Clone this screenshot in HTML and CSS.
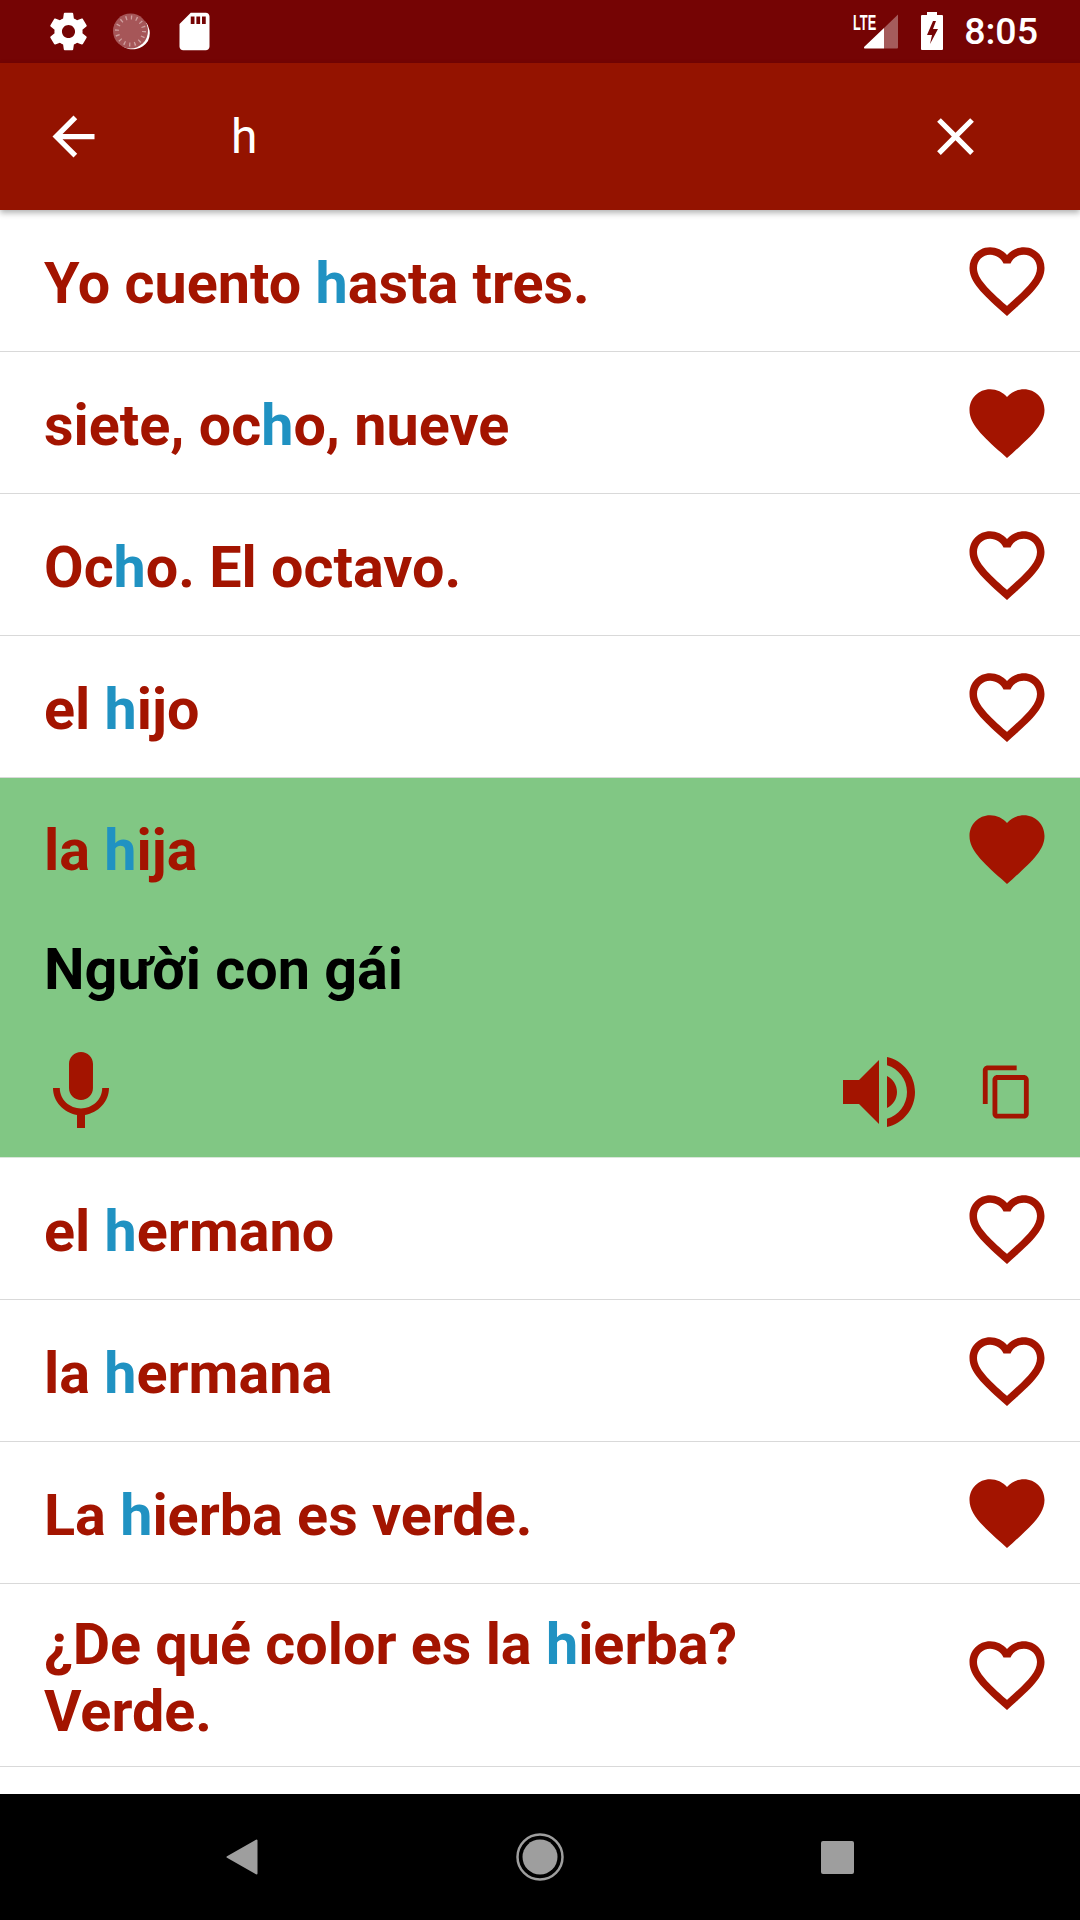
FILE: index.html
```html
<!DOCTYPE html>
<html lang="es">
<head>
<meta charset="utf-8">
<title>Search</title>
<link rel="stylesheet" href="styles.css">
</head>
<body>
<svg class="defs" width="0" height="0" aria-hidden="true">
  <symbol id="heart-o" viewBox="0 0 24 24"><path d="M16.5 3c-1.74 0-3.41.81-4.5 2.09C10.91 3.81 9.24 3 7.5 3 4.42 3 2 5.42 2 8.5c0 3.78 3.4 6.86 8.55 11.54L12 21.35l1.45-1.32C18.6 15.36 22 12.28 22 8.5 22 5.42 19.58 3 16.5 3zm-4.4 15.55l-.1.1-.1-.1C7.14 14.24 4 11.39 4 8.5 4 6.5 5.5 5 7.5 5c1.54 0 3.04.99 3.57 2.36h1.87C13.46 5.99 14.96 5 16.5 5c2 0 3.5 1.5 3.5 3.5 0 2.89-3.14 5.74-7.9 10.05z"/></symbol>
  <symbol id="heart-f" viewBox="0 0 24 24"><path d="M12 21.35l-1.45-1.32C5.4 15.36 2 12.28 2 8.5 2 5.42 4.42 3 7.5 3c1.74 0 3.41.81 4.5 2.09C13.09 3.81 14.76 3 16.5 3 19.58 3 22 5.42 22 8.5c0 3.78-3.4 6.86-8.55 11.54L12 21.35z"/></symbol>
</svg>
<div class="screen">
  <header class="status">
    <div class="status-left">
      <svg class="si" viewBox="0 0 24 24"><path fill="#fff" d="M19.43 12.98c.04-.32.07-.64.07-.98s-.03-.66-.07-.98l2.11-1.65c.19-.15.24-.42.12-.64l-2-3.46c-.12-.22-.39-.3-.61-.22l-2.49 1c-.52-.4-1.08-.73-1.69-.98l-.38-2.65C14.46 2.18 14.25 2 14 2h-4c-.25 0-.46.18-.49.42l-.38 2.65c-.61.25-1.17.59-1.69.98l-2.49-1c-.23-.09-.49 0-.61.22l-2 3.46c-.13.22-.07.49.12.64l2.11 1.65c-.04.32-.07.65-.07.98s.03.66.07.98l-2.11 1.65c-.19.15-.24.42-.12.64l2 3.46c.12.22.39.3.61.22l2.49-1c.52.4 1.08.73 1.69.98l.38 2.65c.03.24.24.42.49.42h4c.25 0 .46-.18.49-.42l.38-2.65c.61-.25 1.17-.59 1.69-.98l2.49 1c.23.09.49 0 .61-.22l2-3.46c.12-.22.07-.49-.12-.64l-2.11-1.65zM12 15.5c-1.93 0-3.5-1.57-3.5-3.5s1.57-3.5 3.5-3.5 3.5 1.57 3.5 3.5-1.57 3.5-3.5 3.5z"/></svg>
      <svg class="si" viewBox="0 0 45 45">
        <path fill="#fff" d="M36 12a18 18 0 0 1-23 25 18.500 18.500 0 0 0 26-5 18 18 0 0 0-3-20z"/>
        <circle cx="21.500" cy="22" r="17.500" fill="#a65658"/>
        <circle cx="21.500" cy="22" r="13.500" fill="none" stroke="#cfa0a0" stroke-width="4" stroke-dasharray="1.300 4"/>
      </svg>
      <svg class="si" viewBox="0 0 24 24"><path fill="#fff" d="M18 2h-8L4.02 8 4 20c0 1.1.9 2 2 2h12c1.1 0 2-.9 2-2V4c0-1.1-.9-2-2-2zm-6 6h-2V4h2v4zm3 0h-2V4h2v4zm3 0h-2V4h2v4z"/></svg>
    </div>
    <div class="status-right">
      <div class="signal">
        <svg class="signal-bars" viewBox="0 0 46 36">
          <path fill="#fff" fill-opacity=".35" d="M45 1.500v33a1 1 0 0 1-1 1H31V15z"/>
          <path fill="#fff" d="M31 15v20.500H12a1 1 0 0 1-.7-1.700z"/>
        </svg>
        <span class="lte">LTE</span>
      </div>
      <svg class="battery" viewBox="0 0 22 38"><path fill="#fff" fill-rule="evenodd" d="M6 0h10v3h5a1 1 0 0 1 1 1v33a1 1 0 0 1-1 1H1a1 1 0 0 1-1-1V4a1 1 0 0 1 1-1h5zM12 9l-6 14h5l-2 9 8-15h-5l3-8z"/></svg>
      <span class="time">8:05</span>
    </div>
  </header>
  <div class="toolbar">
    <svg class="tb-icon" viewBox="0 0 24 24"><path fill="#fff" d="M20 11H7.830l5.590-5.590L12 4l-8 8 8 8 1.410-1.410L7.830 13H20v-2z"/></svg>
    <span class="query">h</span>
    <svg class="tb-icon" viewBox="0 0 24 24"><path fill="#fff" d="M19 6.410L17.590 5 12 10.590 6.410 5 5 6.410 10.590 12 5 17.590 6.410 19 12 13.410 17.590 19 19 17.590 13.410 12z"/></svg>
  </div>
  <main class="list">
    <div class="row"><p class="phrase">Yo cuento <b>h</b>asta tres.</p><svg class="heart"><use href="#heart-o"/></svg></div>
    <div class="row"><p class="phrase">siete, oc<b>h</b>o, nueve</p><svg class="heart"><use href="#heart-f"/></svg></div>
    <div class="row"><p class="phrase">Oc<b>h</b>o. El octavo.</p><svg class="heart"><use href="#heart-o"/></svg></div>
    <div class="row"><p class="phrase">el <b>h</b>ijo</p><svg class="heart"><use href="#heart-o"/></svg></div>
    <section class="open">
      <div class="open-head"><p class="phrase phrase-open">la <b>h</b>ija</p><svg class="heart"><use href="#heart-f"/></svg></div>
      <p class="meaning">Người con gái</p>
      <div class="actions">
        <svg class="act" viewBox="0 0 24 24"><path d="M12 14c1.660 0 2.990-1.340 2.990-3L15 5c0-1.660-1.340-3-3-3S9 3.340 9 5v6c0 1.660 1.340 3 3 3zm5.300-3c0 3-2.540 5.100-5.300 5.100S6.700 14 6.700 11H5c0 3.410 2.720 6.230 6 6.720V21h2v-3.280c3.280-.48 6-3.300 6-6.720h-1.700z"/></svg>
        <span class="spacer"></span>
        <svg class="act" viewBox="0 0 24 24"><path d="M3 9v6h4l5 5V4L7 9H3zm13.500 3c0-1.770-1.020-3.290-2.500-4.030v8.050c1.480-.73 2.500-2.250 2.500-4.020zM14 3.230v2.060c2.890.86 5 3.540 5 6.710s-2.110 5.850-5 6.710v2.060c4.010-.91 7-4.490 7-8.770s-2.990-7.860-7-8.770z"/></svg>
        <svg class="copy" viewBox="0 0 24 24"><path d="M16 1H4c-1.100 0-2 .9-2 2v14h2V3h12V1zm3 4H8c-1.100 0-2 .9-2 2v14c0 1.100.9 2 2 2h11c1.100 0 2-.9 2-2V7c0-1.100-.9-2-2-2zm0 16H8V7h11v14z"/></svg>
      </div>
    </section>
    <div class="row"><p class="phrase">el <b>h</b>ermano</p><svg class="heart"><use href="#heart-o"/></svg></div>
    <div class="row"><p class="phrase">la <b>h</b>ermana</p><svg class="heart"><use href="#heart-o"/></svg></div>
    <div class="row"><p class="phrase">La <b>h</b>ierba es verde.</p><svg class="heart"><use href="#heart-f"/></svg></div>
    <div class="row"><p class="phrase">¿De qué color es la <b>h</b>ierba?<br>Verde.</p><svg class="heart"><use href="#heart-o"/></svg></div>
  </main>
  <footer class="nav">
    <svg class="nav-back" viewBox="0 0 32 36"><path fill="#9e9e9e" stroke="#9e9e9e" stroke-width="2" stroke-linejoin="round" d="M30.500 1.500v33L1.500 18z"/></svg>
    <svg class="nav-home" viewBox="0 0 48 48"><circle cx="24" cy="24" r="22.500" fill="none" stroke="#9e9e9e" stroke-width="2.500"/><circle cx="24" cy="24" r="17.500" fill="#9e9e9e"/></svg>
    <span class="nav-recent"></span>
  </footer>
</div>
</body>
</html>
```
FILE: styles.css
```css
* { box-sizing: border-box; }
html, body { margin: 0; padding: 0; }
body { width: 1080px; height: 1920px; overflow: hidden; font-family: Roboto, "Noto Sans", sans-serif; background: #fff; }
.defs { position: absolute; }
.screen { width: 1080px; height: 1920px; display: flex; flex-direction: column; }

.status { height: 63px; flex: none; background: #750404; display: flex; align-items: center; justify-content: space-between; padding: 0 42px 1px 46px; }
.status-left { display: flex; align-items: center; gap: 18px; }
.si { width: 45px; height: 45px; display: block; }
.status-right { display: flex; align-items: center; }
.signal { width: 46px; height: 36px; position: relative; }
.signal-bars { width: 46px; height: 36px; display: block; }
.lte { position: absolute; left: 0; top: -2px; font-family: "Liberation Sans", sans-serif; font-size: 22px; line-height: 24px; font-weight: 700; color: #fff; transform: scaleX(.58); transform-origin: left center; }
.battery { width: 22px; height: 38px; display: block; margin-left: 22px; }
.time { margin-left: 21px; color: #fff; font-size: 37.500px; font-weight: 500; line-height: 45px; }

.toolbar { height: 147px; flex: none; background: #941300; display: flex; align-items: center; padding: 0 93px 0 42px; box-shadow: 0 3px 6px rgba(0,0,0,.3); position: relative; z-index: 1; }
.tb-icon { width: 63px; height: 63px; display: block; flex: none; }
.query { flex: 1; margin-left: 126px; color: #fff; font-size: 48px; line-height: 63px; }

.list { flex: 1; display: flex; flex-direction: column; }
.row { min-height: 142px; flex: none; display: flex; align-items: center; justify-content: space-between; gap: 40px; padding: 24px 28.500px 24px 44px; border-bottom: 1px solid #d9d9d9; }
.phrase { margin: 0; flex: 1; color: #a31400; font-size: 57.500px; line-height: 67px; font-weight: 700; position: relative; top: 3px; }
.phrase-open { top: 1px; }
.phrase b { color: #2092c2; font-weight: 700; }
.heart { width: 90px; height: 90px; flex: none; display: block; fill: #a31400; }

.open { height: 380px; flex: none; background: #81c784; display: flex; flex-direction: column; border-bottom: 1px solid #d9e6da; }
.open-head { height: 142px; flex: none; display: flex; align-items: center; padding: 0 28.500px 0 44px; }
.meaning { margin: 0; padding-left: 44px; color: #000; font-size: 57.500px; line-height: 67px; font-weight: 700; flex: none; margin-top: 16px; }
.actions { display: flex; align-items: center; padding: 0 44px 0 33px; margin-top: 41px; }
.act { width: 96px; height: 96px; display: block; flex: none; fill: #a31400; }
.spacer { flex: 1; }
.copy { width: 58px; height: 58px; display: block; flex: none; fill: #a31400; margin-left: 51px; }

.nav { height: 126px; flex: none; background: #000; display: flex; align-items: center; padding: 0 226px 0 226px; justify-content: space-between; }
.nav-back { width: 32px; height: 36px; display: block; }
.nav-home { width: 48px; height: 48px; display: block; }
.nav-recent { width: 33px; height: 33px; background: #9e9e9e; border-radius: 2px; display: block; }
```
